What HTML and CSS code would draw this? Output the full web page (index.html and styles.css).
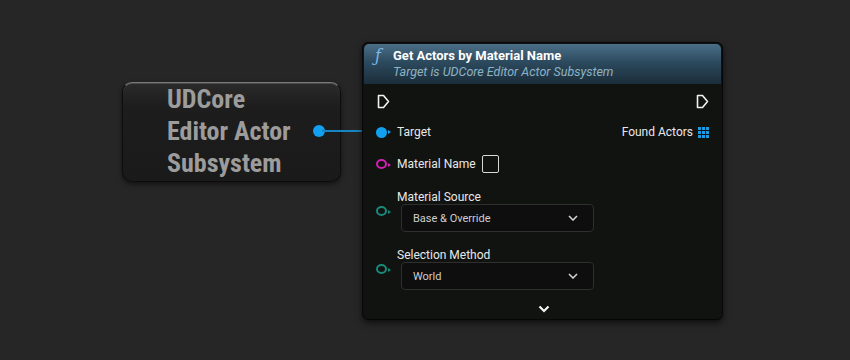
FILE: index.html
```html
<!DOCTYPE html>
<html>

<head>
    <title>Blueprint Graph</title>
    <link rel="stylesheet" href="styles.css">
</head>

<body>
    <div class="graph">

        <!-- self node -->
        <div class="node-self">
            <div class="self-text">UDCore<br>Editor Actor<br>Subsystem</div>
            <span class="self-pin"></span>
        </div>

        <div class="wire"></div>

        <!-- function node -->
        <div class="node">
            <div class="node-head">
                <span class="fn-icon">&fnof;</span>
                <div>
                    <div class="node-title">Get Actors by Material Name</div>
                    <div class="node-sub">Target is UDCore Editor Actor Subsystem</div>
                </div>
            </div>

            <div class="node-body">
                <div class="row row-exec">
                    <svg class="exec" width="13" height="15" viewBox="0 0 13 15">
                        <path d="M1.5 1.5 H6.5 L11.5 7.5 L6.5 13.5 H1.5 Z" fill="none" stroke="#f0f0f0" stroke-width="1.6" stroke-linejoin="round" />
                    </svg>
                    <svg class="exec" width="13" height="15" viewBox="0 0 13 15">
                        <path d="M1.5 1.5 H6.5 L11.5 7.5 L6.5 13.5 H1.5 Z" fill="none" stroke="#f0f0f0" stroke-width="1.6" stroke-linejoin="round" />
                    </svg>
                </div>

                <div class="row row-target">
                    <div class="pin-label">
                        <span class="pin pin-blue"></span>
                        <span class="label">Target</span>
                    </div>
                    <div class="pin-label">
                        <span class="label">Found Actors</span>
                        <span class="grid-icon">
                            <i></i><i></i><i></i><i></i><i></i><i></i><i></i><i></i><i></i>
                        </span>
                    </div>
                </div>

                <div class="row row-name">
                    <div class="pin-label">
                        <span class="pin pin-ring pin-magenta"></span>
                        <span class="label">Material Name</span>
                        <span class="checkbox"></span>
                    </div>
                </div>

                <div class="group group-first">
                    <span class="pin pin-ring pin-teal"></span>
                    <div class="group-main">
                        <div class="label">Material Source</div>
                        <div class="dropdown">
                            <span>Base &amp; Override</span>
                            <svg width="10" height="6" viewBox="0 0 10 6">
                                <path d="M1 1 L5 5 L9 1" fill="none" stroke="#d0d0d0" stroke-width="1.6" />
                            </svg>
                        </div>
                    </div>
                </div>

                <div class="group">
                    <span class="pin pin-ring pin-teal"></span>
                    <div class="group-main">
                        <div class="label">Selection Method</div>
                        <div class="dropdown">
                            <span>World</span>
                            <svg width="10" height="6" viewBox="0 0 10 6">
                                <path d="M1 1 L5 5 L9 1" fill="none" stroke="#d0d0d0" stroke-width="1.6" />
                            </svg>
                        </div>
                    </div>
                </div>

                <div class="more">
                    <svg width="12" height="8" viewBox="0 0 12 8">
                        <path d="M1.5 1.5 L6 6 L10.5 1.5" fill="none" stroke="#f2f2f2" stroke-width="2.2" />
                    </svg>
                </div>
            </div>
        </div>

    </div>
</body>

</html>
```

FILE: styles.css
```css
body {
    margin: 0;
    background-color: #262626;
    font-family: Roboto, "Noto Sans", sans-serif;
    color: #e6e6e6;
}

.graph {
    position: relative;
    width: 850px;
    height: 360px;
    overflow: hidden;
}

/* self node on the left */

.node-self {
    position: absolute;
    left: 122px;
    top: 82px;
    width: 219px;
    height: 100px;
    box-sizing: border-box;
    border-radius: 10px;
    background: linear-gradient(#2a2a2a, #1d1d1d 25%, #1a1a1a);
    border: 1px solid #0d0d0d;
    border-top-color: #7a7a7a;
    box-shadow: 0 2px 5px rgba(0, 0, 0, 0.55), inset 0 1px 0 #4a4a4a;
    padding-left: 44px;
}

.self-text {
    font-family: "Roboto Condensed", Roboto, sans-serif;
    font-weight: bold;
    font-size: 26px;
    line-height: 32px;
    color: #9c9c9c;
}

.self-pin {
    position: absolute;
    left: 190px;
    top: 42px;
    width: 12px;
    height: 12px;
    border-radius: 50%;
    background: #12a0f0;
}

.wire {
    position: absolute;
    left: 322px;
    top: 130px;
    width: 60px;
    height: 2px;
    background: #1585c4;
}

/* function node */

.node {
    position: absolute;
    left: 362px;
    top: 42px;
    width: 361px;
    height: 278px;
    box-sizing: border-box;
    border: 1px solid #070707;
    border-radius: 6px;
    background-color: #111311;
    box-shadow: 0 3px 6px rgba(0, 0, 0, 0.6);
    overflow: hidden;
}

.node-head {
    height: 40px;
    margin: 1px 1px 0;
    border-radius: 5px 5px 0 0;
    background: linear-gradient(#4b6f88, #2c4a5e 45%, #1b2d3a);
    display: flex;
    align-items: flex-start;
    padding: 3px 0 0 11px;
    box-sizing: border-box;
}

.fn-icon {
    font-family: "DejaVu Serif", serif;
    font-style: italic;
    font-size: 16px;
    color: #7fb6e6;
    width: 18px;
    line-height: 18px;
}

.node-title {
    font-weight: bold;
    font-size: 13px;
    line-height: 17px;
    color: #ffffff;
}

.node-sub {
    font-style: italic;
    font-size: 12.5px;
    line-height: 16px;
    color: #8eb3c4;
}

.node-body {
    padding: 2px 13px 0 13px;
}

.row {
    display: flex;
    justify-content: space-between;
    align-items: center;
    box-sizing: border-box;
}

.row-exec {
    height: 30px;
    padding-left: 1px;
}

.row-target {
    height: 31px;
    padding-top: 1px;
}

.row-name {
    height: 34px;
}

.pin-label {
    display: flex;
    align-items: center;
}

.label {
    font-size: 12px;
    line-height: 16px;
    color: #e8e8e8;
}

.pin {
    position: relative;
    display: inline-block;
    width: 11px;
    height: 11px;
    box-sizing: border-box;
    border-radius: 50%;
    margin-right: 10px;
    flex-shrink: 0;
}

.pin:after {
    content: "";
    position: absolute;
    right: -4px;
    top: 3px;
    border-left: 3px solid;
    border-top: 2.5px solid transparent;
    border-bottom: 2.5px solid transparent;
}

.pin-blue {
    background: #12a0f0;
    color: #12a0f0;
}

.pin-ring {
    border: 2px solid;
    width: 11px;
    height: 10px;
}

.pin-ring:after {
    top: 1.5px;
    right: -6px;
}

.pin-magenta {
    color: #d21fb4;
    border-color: #d21fb4;
}

.pin-teal {
    color: #1a8a7a;
    border-color: #1a8a7a;
}

.grid-icon {
    display: grid;
    grid-template-columns: repeat(3, 3px);
    grid-auto-rows: 3px;
    gap: 1px;
    margin-left: 5px;
}

.grid-icon i {
    background: #1a9be6;
}

.checkbox {
    width: 17px;
    height: 18px;
    box-sizing: border-box;
    border: 1px solid #d8d8d8;
    border-radius: 2px;
    margin-left: 6px;
}

.group {
    display: flex;
    align-items: flex-start;
    margin-top: 14px;
}

.group-first {
    margin-top: 7px;
}

.group .label {
    line-height: 14px;
    padding-top: 2px;
}

.group .pin {
    margin-top: 18px;
    margin-right: 10px;
}

.group-main {
    display: flex;
    flex-direction: column;
}

.dropdown {
    margin-left: 4px;
    width: 193px;
    height: 28px;
    box-sizing: border-box;
    border: 1px solid #2f2f2f;
    border-radius: 4px;
    background: #0d0e0d;
    display: flex;
    align-items: center;
    justify-content: space-between;
    padding: 0 15px 0 11px;
    font-size: 11px;
    color: #cfcfcf;
}

.more {
    display: flex;
    justify-content: center;
    padding-top: 15px;
    padding-left: 3px;
}
```
